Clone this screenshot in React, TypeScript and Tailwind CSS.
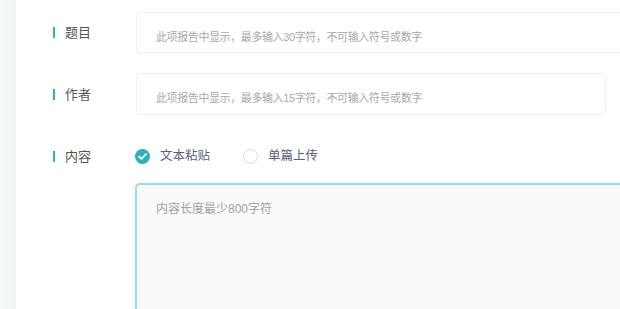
import React from "react";

const FONT = "font-['Liberation_Sans','Noto_Sans_CJK_SC',sans-serif]";

function Label({ text }: { text: string }) {
  return (
    <div className="flex w-[120px] shrink-0 items-center gap-[10px] pl-[37px]">
      <span className="h-[11px] w-[2px] bg-[#2bb3bf]" />
      <span className="text-[13px] leading-none text-[#555]">{text}</span>
    </div>
  );
}

function Radio({ checked, label }: { checked?: boolean; label: string }) {
  return (
    <label className="flex items-center gap-[10px]">
      {checked ? (
        <span className="flex h-[15px] w-[15px] items-center justify-center rounded-full bg-[#2bb0bc]">
          <svg width="9" height="7" viewBox="0 0 9 7" fill="none">
            <path d="M1 3.5 L3.4 5.8 L8 1.2" stroke="#fff" strokeWidth="1.8" strokeLinecap="round" strokeLinejoin="round" />
          </svg>
        </span>
      ) : (
        <span className="h-[15px] w-[15px] rounded-full border border-[#d9d9d9] bg-white" />
      )}
      <span className="text-[12.5px] leading-none text-[#5b607a]">{label}</span>
    </label>
  );
}

export default function App() {
  return (
    <div className={`flex h-[309px] w-[620px] overflow-hidden bg-white ${FONT}`}>
      <div className="w-[16px] shrink-0 bg-gradient-to-r from-[#f9fbfc] to-[#ecf5f7]" />
      <div className="flex min-w-0 flex-1 flex-col overflow-hidden bg-white pt-[12px]">
        <div className="flex h-[41px] items-center">
          <Label text="题目" />
          <div className="flex h-[41px] w-[500px] shrink-0 items-center rounded-[4px] border border-[#f0f0f0] pl-[19px] pt-[9px] text-[11px] tracking-[-0.4px] text-[#a8a8a8]">
            此项报告中显示，最多输入30字符，不可输入符号或数字
          </div>
        </div>
        <div className="mt-[20px] flex h-[42px] items-center">
          <Label text="作者" />
          <div className="flex h-[42px] w-[470px] shrink-0 items-center rounded-[4px] border border-[#f0f0f0] pl-[19px] pt-[8px] text-[11px] tracking-[-0.4px] text-[#a8a8a8]">
            此项报告中显示，最多输入15字符，不可输入符号或数字
          </div>
        </div>
        <div className="mt-[34px] flex h-[20px] items-center">
          <Label text="内容" />
          <div className="-ml-px flex items-center gap-[33px]">
            <Radio checked label="文本粘贴" />
            <Radio label="单篇上传" />
          </div>
        </div>
        <div className="mt-[19px] flex">
          <div className="w-[119px] shrink-0" />
          <div className="h-[160px] w-[520px] shrink-0 rounded-tl-[5px] border-2 border-r-0 border-[#95dfe5] bg-[#fafafa] pl-[19px] pt-[18px] text-[12px] leading-none text-[#a0a0a0]">
            内容长度最少800字符
          </div>
        </div>
      </div>
    </div>
  );
}
